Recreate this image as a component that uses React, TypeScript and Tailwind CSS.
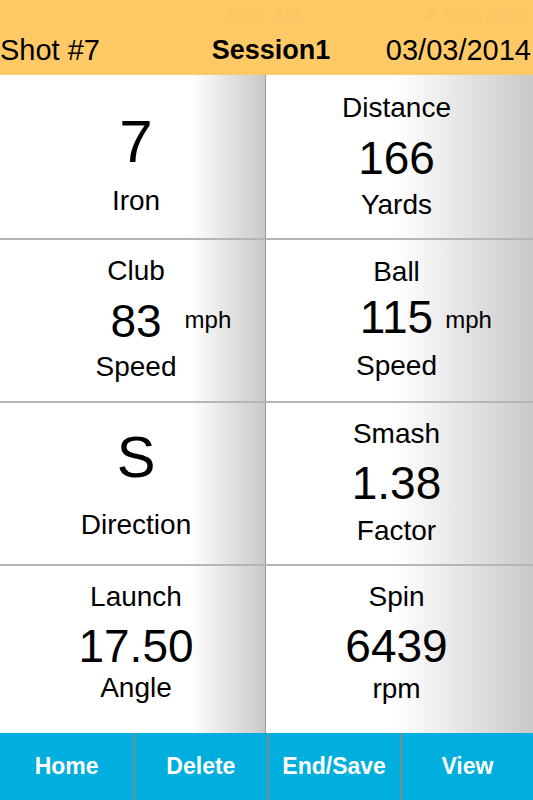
import React from "react";

const font = { fontFamily: '"Liberation Sans", Arial, Helvetica, sans-serif' };

function Label({ children, cls = "" }: { children: React.ReactNode; cls?: string }) {
  return <div className={`h-[32px] leading-[32px] text-[28px] text-black whitespace-nowrap ${cls}`}>{children}</div>;
}

function Num({ children, cls = "" }: { children: React.ReactNode; cls?: string }) {
  return <div className={`h-[50px] leading-[50px] text-[46px] text-black whitespace-nowrap ${cls}`}>{children}</div>;
}

const leftBg = "bg-[linear-gradient(to_right,#ffffff_0px,#ffffff_190px,#c9c9c9_265px)]";
const rightBg = "bg-[linear-gradient(to_right,#ffffff_0px,#ffffff_130px,#c9c9c9_267px)]";

export default function App() {
  return (
    <div style={font} className="w-[533px] h-[800px] flex flex-col bg-white overflow-hidden">
      {/* Header */}
      <div className="h-[75px] bg-[#ffca66] flex flex-col">
        <div className="h-[26px] pt-[6px] grid grid-cols-[1fr_auto_1fr] items-center text-[#f8c663]">
          <div />
          <div className="text-[20px] leading-[20px] ml-[-4px]">9:31 AM</div>
          <div className="flex justify-end items-center gap-[6px] pr-[10px]">
            <span className="text-[18px] leading-[18px]">✱</span>
            <span className="text-[18px] leading-[18px]">96%</span>
            <div className="w-[36px] h-[14px] border-[1.5px] border-[#f8c663] rounded-[2px] p-[1px]">
              <div className="h-full w-[90%] bg-[#f8c663]" />
            </div>
          </div>
        </div>
        <div className="h-[49px] grid grid-cols-[1fr_auto_1fr] items-center text-black">
          <div className="text-[29px] leading-none whitespace-nowrap">Shot #7</div>
          <div className="text-[27px] leading-none font-bold ml-[9px]">Session1</div>
          <div className="text-[29px] leading-none text-right pr-[2px] whitespace-nowrap">03/03/2014</div>
        </div>
      </div>

      {/* Row 1 */}
      <div className="h-[163px] flex">
        <div className={`w-[265px] ${leftBg} flex flex-col items-center pt-[35px] pl-[7px]`}>
          <div className="h-[64px] leading-[64px] text-[60px] text-black">7</div>
          <Label cls="mt-[11px]">Iron</Label>
        </div>
        <div className="w-px bg-[#9c9c9c]" />
        <div className={`flex-1 ${rightBg} flex flex-col items-center pt-[17px] pr-[6px]`}>
          <Label>Distance</Label>
          <Num cls="mt-[9px]">166</Num>
          <Label cls="mt-[6px]">Yards</Label>
        </div>
      </div>
      <div className="h-[2px] bg-[#b5b5b5]" />

      {/* Row 2 */}
      <div className="h-[161px] flex">
        <div className={`w-[265px] ${leftBg} flex flex-col items-center pt-[15px] pl-[7px]`}>
          <Label>Club</Label>
          <div className="relative mt-[9px]">
            <Num>83</Num>
            <div className="absolute left-[calc(100%+23px)] top-0 h-[50px] flex items-center text-[24px] leading-none -mt-[1px]">mph</div>
          </div>
          <Label cls="mt-[5px]">Speed</Label>
        </div>
        <div className="w-px bg-[#9c9c9c]" />
        <div className={`flex-1 ${rightBg} flex flex-col items-center pt-[16px] pr-[6px]`}>
          <Label>Ball</Label>
          <div className="relative mt-[4px]">
            <Num>115</Num>
            <div className="absolute left-[calc(100%+12px)] top-0 h-[50px] flex items-center text-[24px] leading-none mt-[3px]">mph</div>
          </div>
          <Label cls="mt-[8px]">Speed</Label>
        </div>
      </div>
      <div className="h-[2px] bg-[#b5b5b5]" />

      {/* Row 3 */}
      <div className="h-[161px] flex">
        <div className={`w-[265px] ${leftBg} flex flex-col items-center pt-[22px] pl-[7px]`}>
          <div className="h-[64px] leading-[64px] text-[58px] text-black">S</div>
          <Label cls="mt-[20px]">Direction</Label>
        </div>
        <div className="w-px bg-[#9c9c9c]" />
        <div className={`flex-1 ${rightBg} flex flex-col items-center pt-[15px] pr-[6px]`}>
          <Label>Smash</Label>
          <Num cls="mt-[8px]">1.38</Num>
          <Label cls="mt-[7px]">Factor</Label>
        </div>
      </div>
      <div className="h-[2px] bg-[#b5b5b5]" />

      {/* Row 4 */}
      <div className="h-[167px] flex">
        <div className={`w-[265px] ${leftBg} flex flex-col items-center pt-[15px] pl-[7px]`}>
          <Label>Launch</Label>
          <Num cls="mt-[8px]">17.50</Num>
          <Label cls="mt-[1px]">Angle</Label>
        </div>
        <div className="w-px bg-[#9c9c9c]" />
        <div className={`flex-1 ${rightBg} flex flex-col items-center pt-[15px] pr-[6px]`}>
          <Label>Spin</Label>
          <Num cls="mt-[8px]">6439</Num>
          <Label cls="mt-[2px]">rpm</Label>
        </div>
      </div>

      {/* Bottom bar */}
      <div className="h-[67px] bg-[#00afde] grid grid-cols-4 text-white font-bold text-[23px]">
        <div className="flex items-center justify-center">Home</div>
        <div className="flex items-center justify-center border-l-2 border-[#7b8a90]">Delete</div>
        <div className="flex items-center justify-center border-l-2 border-[#7b8a90]">End/Save</div>
        <div className="flex items-center justify-center border-l-2 border-[#7b8a90]">View</div>
      </div>
    </div>
  );
}
